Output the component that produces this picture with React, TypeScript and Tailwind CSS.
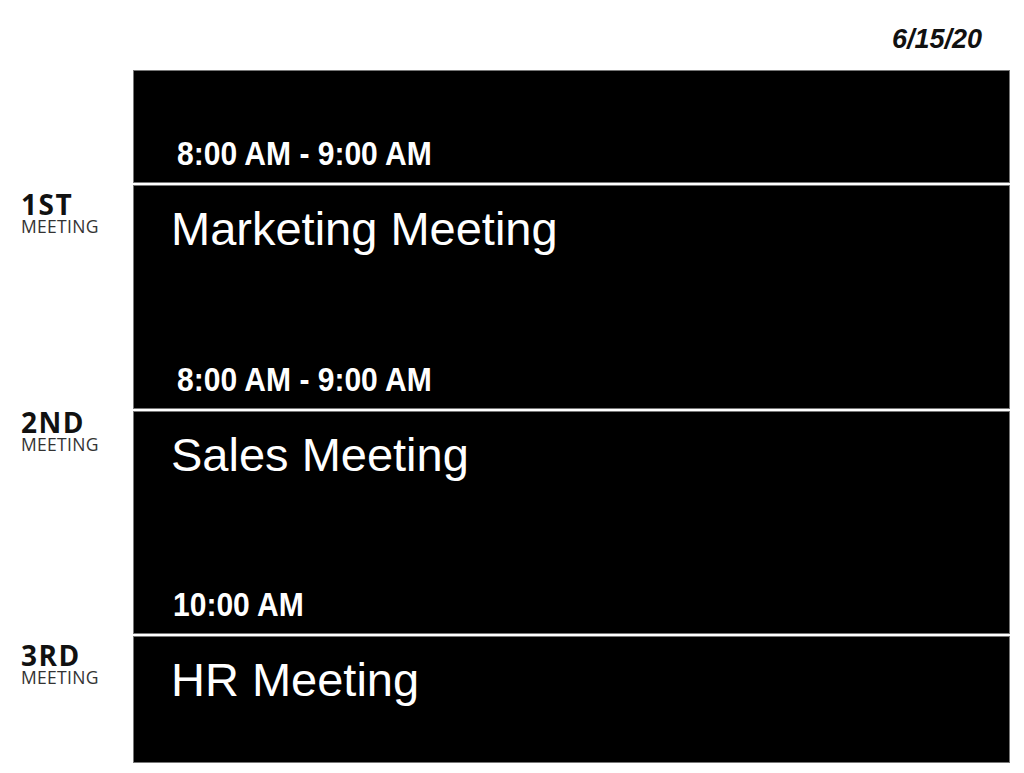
import React from "react";

const rows = [
  { label: null, labelPt: "pt-0", title: null, time: "8:00 AM - 9:00 AM", timePl: "pl-[43px]", h: "h-[113px]" },
  { label: "1ST", labelPt: "pt-[6px]", title: "Marketing Meeting", time: "8:00 AM - 9:00 AM", timePl: "pl-[43px]", h: "h-[224px]" },
  { label: "2ND", labelPt: "pt-0 -mt-[2px]", title: "Sales Meeting", time: "10:00 AM", timePl: "pl-[39px]", h: "h-[223px]" },
  { label: "3RD", labelPt: "pt-[6px]", title: "HR Meeting", time: null, timePl: "", h: "h-[127px]" },
];

export default function App() {
  return (
    <div className="w-[1024px] h-[773px] bg-white overflow-hidden" style={{ fontFamily: '"Liberation Sans", Arial, sans-serif' }}>
      <div className="flex justify-end pr-[42px] pt-[26px] h-[70px]">
        <div className="text-[27px] leading-none font-bold italic text-[#111]">6/15/20</div>
      </div>
      <div className="flex flex-col gap-[2px]">
        {rows.map((r, i) => (
          <div key={i} className="flex">
            <div className="w-[133px] shrink-0 pl-[21px]" style={{ fontFamily: '"Open Sans", "Noto Sans", sans-serif' }}>
              {r.label && (
                <div className={r.labelPt}>
                  <div className="text-[28px] leading-[26px] font-bold tracking-[1.5px] text-[#111]">{r.label}</div>
                  <div className="mt-[1px] text-[17.5px] leading-[17px] tracking-[0.3px] text-[#333]">MEETING</div>
                </div>
              )}
            </div>
            <div className={`w-[877px] ${r.h} bg-black border border-[#777] flex flex-col justify-between`}>
              <div>
                {r.title && (
                  <div className="pl-[37px] pt-[19px] text-[47px] leading-none text-white whitespace-nowrap">{r.title}</div>
                )}
              </div>
              {r.time && (
                <div className={`${r.timePl} pb-[12px]`}>
                  <div className="text-[33px] leading-none font-bold text-white scale-x-[0.91] origin-left whitespace-nowrap">
                    {r.time}
                  </div>
                </div>
              )}
            </div>
          </div>
        ))}
      </div>
    </div>
  );
}
